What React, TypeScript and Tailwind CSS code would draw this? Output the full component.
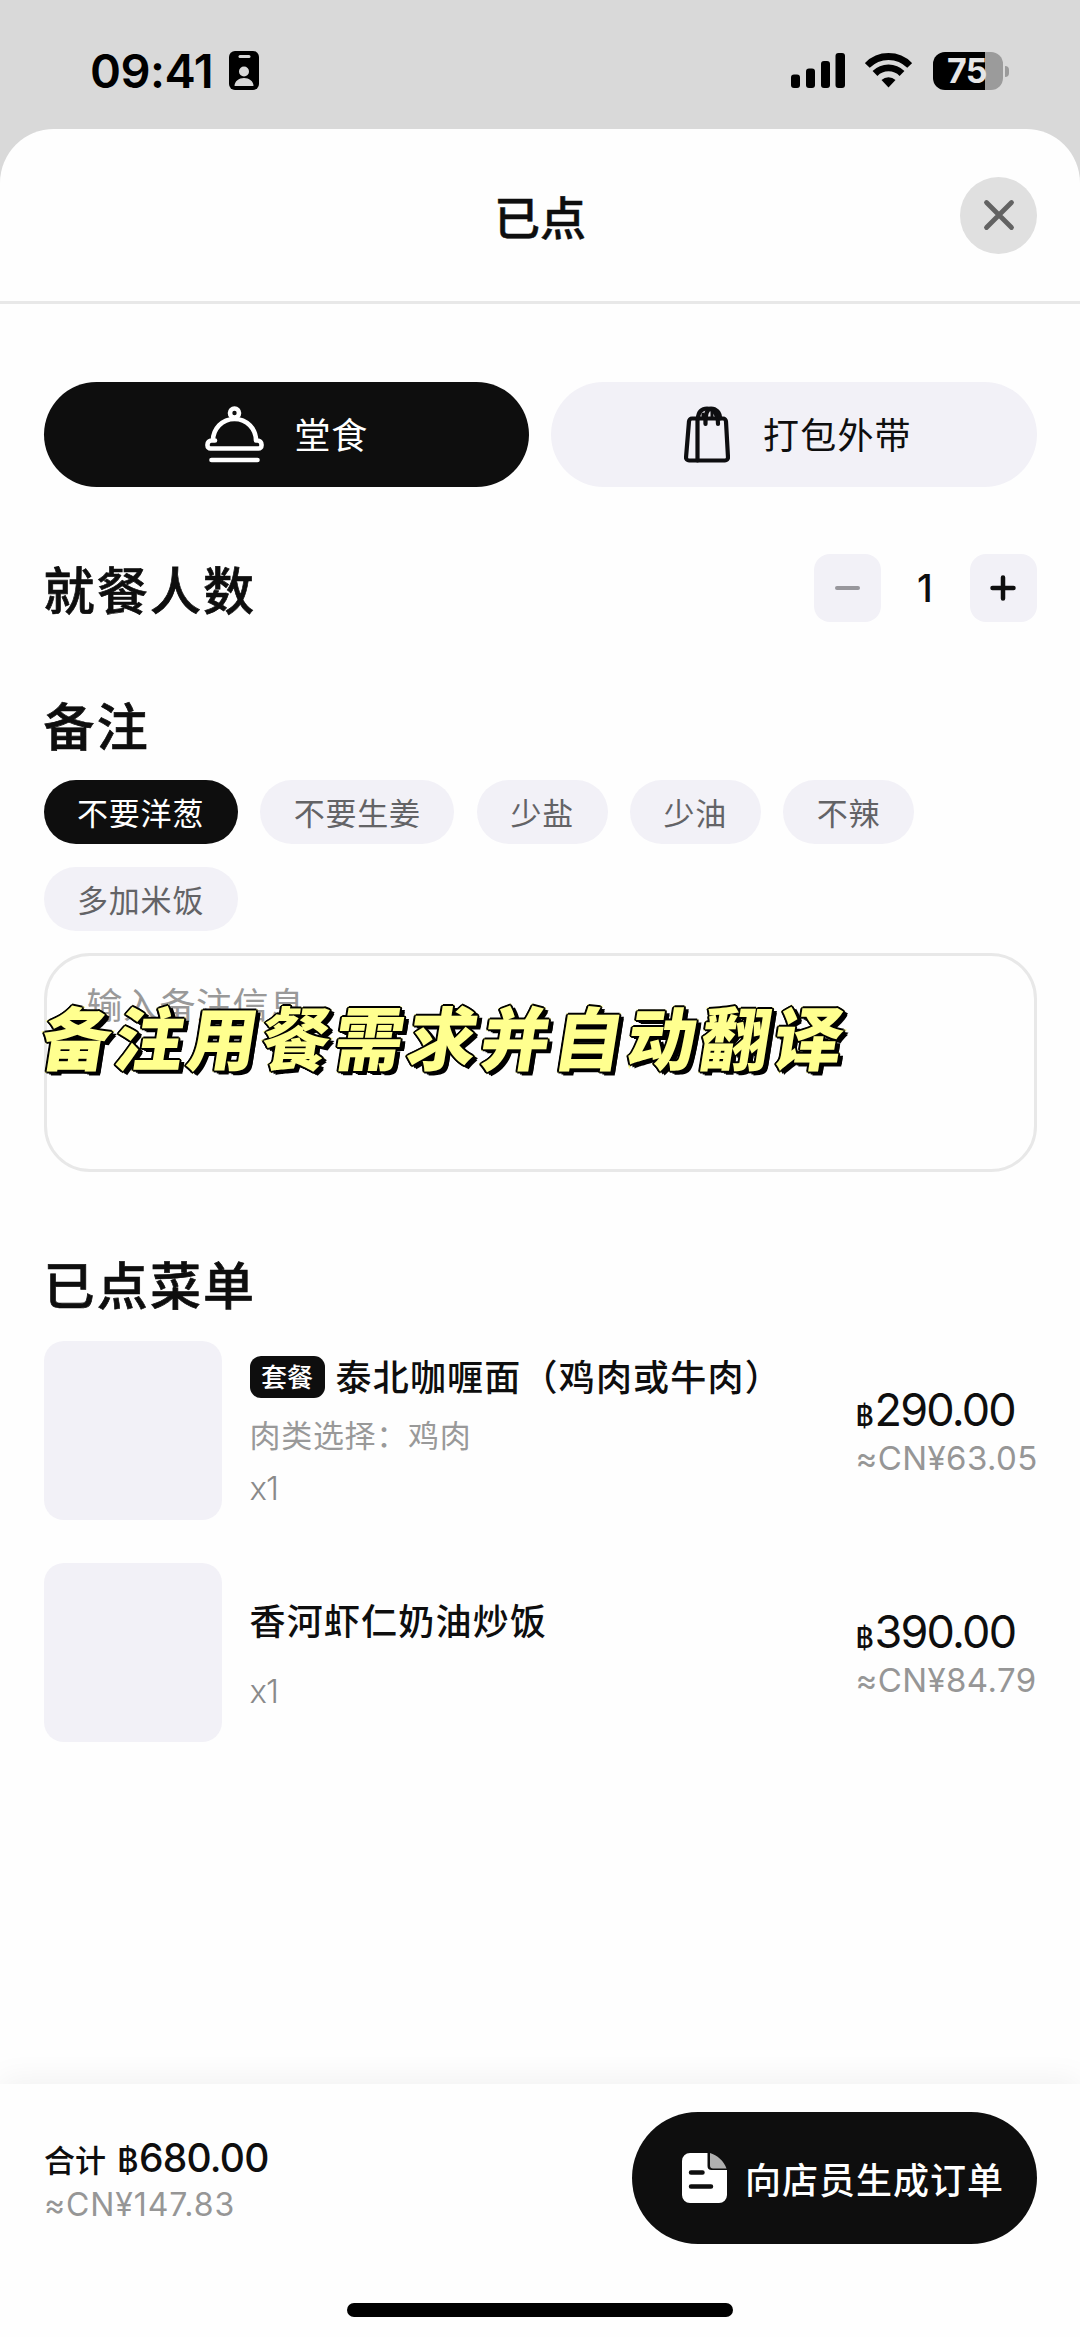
import React from "react";

const CJK = "font-['Noto_Sans_CJK_SC',sans-serif]";
const HEADING =
  "text-[51px] font-medium leading-[68px] tracking-[2.200px] [-webkit-text-stroke:0.700px_#0e0e0e] font-['Noto_Sans_CJK_SC',sans-serif]";

function StatusBar() {
  return (
    <div className="flex h-[129px] shrink-0 items-start justify-between pl-[90px] pr-[71px] pt-[51px] text-black">
      <div className="flex items-start">
        <span className="w-[139px] text-[47px] font-semibold leading-[39px] tracking-[-0.500px]">09:41</span>
        <svg width="30" height="39" viewBox="0 0 30 39">
          <rect width="30" height="39" rx="6" fill="#000" />
          <rect x="9.5" y="4" width="12" height="3" rx="1.5" fill="#d9d9d9" />
          <circle cx="15" cy="20.500" r="5" fill="#d9d9d9" />
          <path d="M5.500 35c0-5 4.500-8 9.500-8s9.500 3 9.500 8z" fill="#d9d9d9" />
        </svg>
      </div>
      <div className="flex items-start">
        <svg className="mt-[2px]" width="54" height="35" viewBox="0 0 54 35">
          <rect x="0" y="21.500" width="9" height="13.500" rx="3" />
          <rect x="15" y="15.500" width="9" height="19.500" rx="3" />
          <rect x="30" y="8" width="9" height="27" rx="3" />
          <rect x="44.500" y="0" width="9.500" height="35" rx="3" />
        </svg>
        <svg className="ml-[20px] mt-[2px]" width="47" height="35" viewBox="0 0 47 35" fill="none" stroke="#000" strokeWidth="6.800">
          <path d="M2.300 12.500A29.500 29.500 0 0 1 44.700 12.500" />
          <path d="M10 20.500A19 19 0 0 1 37 20.500" />
          <path d="M23.500 34.500l-7-7.500a10.500 10.500 0 0 1 14 0z" fill="#000" stroke="none" />
        </svg>
        <div className="ml-[21px] mt-px flex items-center gap-[2px]">
          <div className="flex h-[38px] w-[70px] items-center justify-center rounded-[12px] bg-[linear-gradient(90deg,#000_52px,#9b9b9b_52px)] text-[34px] font-bold leading-[38px] tracking-[-0.500px] text-[#e6e6e6]">
            <span className="-ml-[2px]">75</span>
          </div>
          <div className="h-[11px] w-[4px] rounded-r-full bg-[#9b9b9b]" />
        </div>
      </div>
    </div>
  );
}

function Cloche() {
  return (
    <svg width="59" height="58" viewBox="0 0 59 58" fill="none" stroke="#fff" strokeWidth="4.600" strokeLinecap="round" strokeLinejoin="round">
      <circle cx="29.500" cy="7" r="4.500" />
      <path d="M8 34.500C8 23 17 13 29.500 13S51 23 51 34.500h1.500a4 4 0 0 1 4 4v1a3 3 0 0 1-3 3h-48a3 3 0 0 1-3-3v-1a4 4 0 0 1 4-4H10" />
      <path d="M6.500 54h46" />
    </svg>
  );
}

function Bag() {
  return (
    <svg width="46" height="58" viewBox="0 0 46 58" fill="none" stroke="#0e0e10" strokeWidth="4.200" strokeLinecap="round" strokeLinejoin="round">
      <path d="M8 12.500h31a3 3 0 0 1 3 3l2 36a3 3 0 0 1-3 3H5a3 3 0 0 1-3-3l3-36a3 3 0 0 1 3-3z" />
      <path d="M13.500 12.500v42" />
      <path d="M14 12.500C14 6 18 2.500 23 2.500S34 6.500 34 18" />
      <path d="M21.500 18C21 9 23 3 27 2.500c5 0 9 4 9 10" />
      <path d="M19 12V8M28 12V6" strokeWidth="3" />
    </svg>
  );
}

function Chip({ label, active = false }: { label: string; active?: boolean }) {
  return (
    <div
      className={
        active
          ? "flex h-[64px] items-center rounded-full bg-[#0e0e0e] px-[33.500px] text-[31px] tracking-[0.800px] text-white"
          : "flex h-[64px] items-center rounded-full bg-[#f2f1f7] px-[33.500px] text-[31px] tracking-[0.800px] text-[#636366]"
      }
    >
      <span className={"leading-[60px] " + CJK}>{label}</span>
    </div>
  );
}

function Price({ baht, yuan }: { baht: string; yuan: string }) {
  return (
    <div className="ml-auto mt-[41px] w-[181px] whitespace-nowrap">
      <div className="flex items-baseline leading-[56px] text-[#0e0e0e]">
        <span className="w-[19px] text-[28px] font-medium tracking-[-1px]">฿</span>
        <span className="text-[45px] tracking-[-1.800px]">{baht}</span>
      </div>
      <div className="mt-[-6px] text-[33px] leading-[40px] tracking-[0.400px] text-[#969696]">≈CN¥{yuan}</div>
    </div>
  );
}

export default function App() {
  return (
    <div className="flex h-[2337px] w-[1080px] flex-col overflow-hidden bg-[#d9d9d9] font-['Inter','Noto_Sans_CJK_SC',sans-serif] text-[#0e0e0e]">
      <StatusBar />
      <div className="flex flex-1 flex-col rounded-t-[54px] bg-[#fefefe]">
        <header className="grid h-[175px] grid-cols-[1fr_auto_1fr] items-center border-b-[3px] border-[#e8e8e8] pl-[43px] pr-[43px]">
          <div />
          <h1 className={"text-[46px] font-medium leading-[60px] [-webkit-text-stroke:0.500px_#0e0e0e] " + CJK}>已点</h1>
          <button className="flex h-[77px] w-[77px] items-center justify-center justify-self-end rounded-full bg-[#e0e0e0]">
            <svg width="34" height="34" viewBox="0 0 34 34" stroke="#636363" strokeWidth="4.800" strokeLinecap="round">
              <path d="M4.500 4.500l25 25M29.500 4.500l-25 25" />
            </svg>
          </button>
        </header>

        <main className="flex flex-1 flex-col px-[43.500px]">
          <div className="mt-[78px] grid grid-cols-2 gap-[22px]">
            <button className="flex h-[105px] items-center rounded-full bg-[#0e0e0e] pl-[161px] text-white">
              <Cloche />
              <span className={"-mt-[3px] ml-[31px] text-[36px] leading-[60px] tracking-[0.800px] " + CJK}>堂食</span>
            </button>
            <button className="flex h-[105px] items-center rounded-full bg-[#f2f1f7] pl-[133px]">
              <Bag />
              <span className={"-mt-[3px] ml-[33px] text-[36px] leading-[60px] tracking-[1.200px] " + CJK}>打包外带</span>
            </button>
          </div>

          <div className="mt-[67px] flex h-[68px] items-center justify-between">
            <h2 className={HEADING}>就餐人数</h2>
            <div className="flex items-center">
              <button className="flex h-[68px] w-[67px] items-center justify-center rounded-[16px] bg-[#f2f1f7]">
                <div className="h-[4px] w-[25px] rounded-full bg-[#98979c]" />
              </button>
              <span className="w-[89px] text-center text-[38px] font-medium leading-[68px]">1</span>
              <button className="flex h-[68px] w-[67px] items-center justify-center rounded-[16px] bg-[#f2f1f7]">
                <svg width="26" height="26" viewBox="0 0 26 26" stroke="#0e0e0e" strokeWidth="4.500" strokeLinecap="round">
                  <path d="M13 2.500v21M2.500 13h21" />
                </svg>
              </button>
            </div>
          </div>

          <h2 className={"mt-[68px] " + HEADING}>备注</h2>
          <div className="mt-[22px] flex flex-wrap gap-[22.500px]">
            <Chip label="不要洋葱" active />
            <Chip label="不要生姜" />
            <Chip label="少盐" />
            <Chip label="少油" />
            <Chip label="不辣" />
            <Chip label="多加米饭" />
          </div>

          <div className="relative mt-[22px] h-[219px] rounded-[46px] border-[3px] border-[#e8e8e8] pl-[40px] pt-[17px]">
            <span className={"text-[36px] leading-[60px] tracking-[0.500px] text-[#999] " + CJK}>输入备注信息</span>
            <div
              className={
                "absolute left-[-4px] top-[27px] -skew-x-[9deg] whitespace-nowrap text-[69px] font-black leading-[104px] tracking-[4.200px] text-[#ffff8f] [-webkit-text-stroke:3px_#ffff8f] [paint-order:stroke_fill] [stroke-linejoin:round] [text-shadow:2px_0_0_#000,-2px_0_0_#000,0_2px_0_#000,0_-2px_0_#000,1.400px_1.400px_0_#000,-1.400px_-1.400px_0_#000,1.400px_-1.400px_0_#000,-1.400px_1.400px_0_#000,3px_3px_0_#000,5px_4px_0_#000,5px_2px_0_#000] " +
                CJK
              }
            >
              备注用餐需求并自动翻译
            </div>
          </div>

          <h2 className={"mt-[77px] " + HEADING}>已点菜单</h2>

          <div className="mt-[24px] flex h-[179px]">
            <div className="h-[179px] w-[178px] rounded-[20px] bg-[#f2f1f7]" />
            <div className="ml-[28px] flex flex-col">
              <div className="mt-[15px] flex h-[43px] items-center">
                <span className={"flex h-[42px] w-[75px] items-center justify-center rounded-[11px] bg-[#0e0e0e] pb-[2px] text-[26px] font-medium leading-[40px] text-white " + CJK}>套餐</span>
                <span className={"-mt-[4px] ml-[11px] text-[36px] font-medium leading-[43px] tracking-[1.200px] " + CJK}>泰北咖喱面（鸡肉或牛肉）</span>
              </div>
              <span className={"mt-[13px] text-[31px] leading-[44px] tracking-[0.700px] text-[#999] " + CJK}>肉类选择：鸡肉</span>
              <span className="mt-[12px] text-[33px] font-light leading-[40px] tracking-[-1px] text-[#8a8a8a]">x1</span>
            </div>
            <Price baht="290.00" yuan="63.05" />
          </div>

          <div className="mt-[43px] flex h-[179px]">
            <div className="h-[179px] w-[178px] rounded-[20px] bg-[#f2f1f7]" />
            <div className="ml-[28px] flex flex-col">
              <span className={"mt-[35px] text-[36px] font-medium leading-[43px] tracking-[1.200px] " + CJK}>香河虾仁奶油炒饭</span>
              <span className="mt-[30px] text-[33px] font-light leading-[40px] tracking-[-1px] text-[#8a8a8a]">x1</span>
            </div>
            <Price baht="390.00" yuan="84.79" />
          </div>
        </main>

        <footer className="flex h-[253px] flex-col bg-[#fefefe] shadow-[0_-6px_28px_rgba(0,0,0,0.05)]">
          <div className="flex h-[219px] items-start justify-between pl-[44px] pr-[43px]">
            <div className="mt-[48px] whitespace-nowrap">
              <div className="flex items-baseline leading-[52px]">
                <span className={"w-[73px] text-[31px] font-medium " + CJK}>合计</span>
                <span className="w-[22px] text-[33px] font-medium">฿</span>
                <span className="text-[39px] font-medium tracking-[-0.800px]">680.00</span>
              </div>
              <div className="text-[32px] leading-[38px] tracking-[0.900px] text-[#969696]">≈CN¥147.83</div>
            </div>
            <button className="mt-[28px] flex h-[132px] w-[405px] items-center rounded-full bg-[#0e0e0e] pl-[50px] text-white">
              <svg width="45" height="50" viewBox="0 0 45 50">
                <path d="M8 0h17.500v13a4 4 0 0 0 4 4H45v25a8 8 0 0 1-8 8H8a8 8 0 0 1-8-8V8a8 8 0 0 1 8-8z" fill="#fff" />
                <path d="M28 0C35 2 42 8 44.500 15.500H31a3 3 0 0 1-3-3z" fill="#b0b0b0" />
                <path d="M9 19.500h11.500M9 33.500h20" stroke="#0e0e0e" strokeWidth="4.500" strokeLinecap="round" />
              </svg>
              <span className={"ml-[18px] whitespace-nowrap text-[36px] font-medium leading-[60px] tracking-[1px] " + CJK}>向店员生成订单</span>
            </button>
          </div>
          <div className="mx-auto h-[14px] w-[386px] rounded-full bg-black" />
        </footer>
      </div>
    </div>
  );
}
